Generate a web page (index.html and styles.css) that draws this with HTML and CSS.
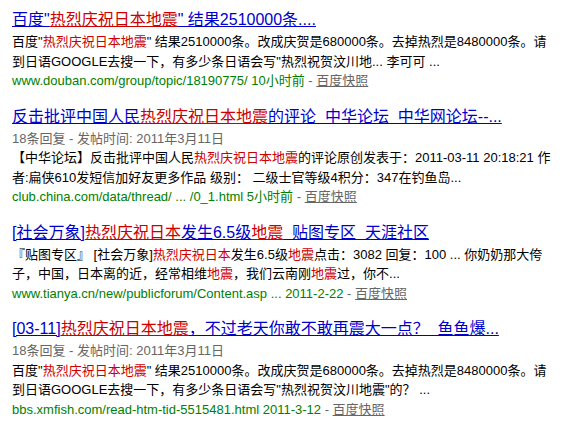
FILE: index.html
```html
<!DOCTYPE html>
<html lang="zh-CN">
<head>
<meta charset="utf-8">
<title>热烈庆祝日本地震</title>
<link rel="stylesheet" href="styles.css">
</head>
<body>
<div class="results">
  <div class="result">
    <h3 class="title"><a href="#">百度"<em>热烈庆祝日本地震</em>" 结果2510000条....</a></h3>
    <div class="abs">百度"<em>热烈庆祝日本地震</em>" 结果2510000条。改成庆贺是680000条。去掉热烈是8480000条。请<br>到日语GOOGLE去搜一下，有多少条日语会写"热烈祝贺汶川地... 李可可 ...</div>
    <div class="meta"><span class="url">www.douban.com/group/topic/18190775/ 10小时前</span> - <a class="snap" href="#">百度快照</a></div>
  </div>
  <div class="result">
    <h3 class="title"><a href="#">反击批评中国人民<em>热烈庆祝日本地震</em>的评论&nbsp;&nbsp;中华论坛&nbsp;&nbsp;中华网论坛--...</a></h3>
    <div class="info">18条回复 - 发帖时间: 2011年3月11日</div>
    <div class="abs">【中华论坛】反击批评中国人民<em>热烈庆祝日本地震</em>的评论原创发表于：2011-03-11 20:18:21 作<br>者:扁侠610发短信加好友更多作品 级别： 二级士官等级4积分：347在钓鱼岛...</div>
    <div class="meta"><span class="url">club.china.com/data/thread/ ... /0_1.html 5小时前</span> - <a class="snap" href="#">百度快照</a></div>
  </div>
  <div class="result">
    <h3 class="title"><a href="#">[社会万象]<em>热烈庆祝日本</em>发生6.5级<em>地震</em>&nbsp;&nbsp;贴图专区&nbsp;&nbsp;天涯社区</a></h3>
    <div class="abs">『贴图专区』 [社会万象]<em>热烈庆祝日本</em>发生6.5级<em>地震</em>点击：3082 回复：100 ... 你奶奶那大侉<br>子，中国，日本离的近，经常相维<em>地震</em>，我们云南刚<em>地震</em>过，你不...</div>
    <div class="meta"><span class="url">www.tianya.cn/new/publicforum/Content.asp ... 2011-2-22</span> - <a class="snap" href="#">百度快照</a></div>
  </div>
  <div class="result">
    <h3 class="title"><a href="#">[03-11]<em>热烈庆祝日本地震</em>，不过老天你敢不敢再震大一点？&nbsp;&nbsp;鱼鱼爆...</a></h3>
    <div class="info">18条回复 - 发帖时间: 2011年3月11日</div>
    <div class="abs">百度"<em>热烈庆祝日本地震</em>" 结果2510000条。改成庆贺是680000条。去掉热烈是8480000条。请<br>到日语GOOGLE去搜一下，有多少条日语会写"热烈祝贺汶川地震"的？ ...</div>
    <div class="meta"><span class="url">bbs.xmfish.com/read-htm-tid-5515481.html 2011-3-12</span> - <a class="snap" href="#">百度快照</a></div>
  </div>
</div>
</body>
</html>
```
FILE: styles.css
```css
html, body {
  margin: 0;
  padding: 0;
  background: #ffffff;
}
body {
  font-family: "Liberation Sans", Arial, "Noto Sans CJK SC", sans-serif;
  font-size: 13px;
  color: #000000;
}
.results {
  padding: 8px 0 0 12px;
  display: flex;
  flex-direction: column;
  gap: 14px;
}
.result {
  display: flex;
  flex-direction: column;
}
.title {
  margin: 0;
  font-size: 16px;
  font-weight: normal;
  line-height: 24px;
  white-space: nowrap;
}
.title a {
  color: #0000cc;
  text-decoration: underline;
}
.title em {
  font-style: normal;
  color: #cc0000;
  text-decoration: underline;
}
.abs, .info, .meta {
  line-height: 19.5px;
  white-space: nowrap;
}
.abs em {
  font-style: normal;
  color: #cc0000;
}
.info {
  color: #666666;
}
.meta {
  color: #666666;
}
.url {
  color: #008000;
}
.snap {
  color: #666666;
  text-decoration: underline;
}
```
